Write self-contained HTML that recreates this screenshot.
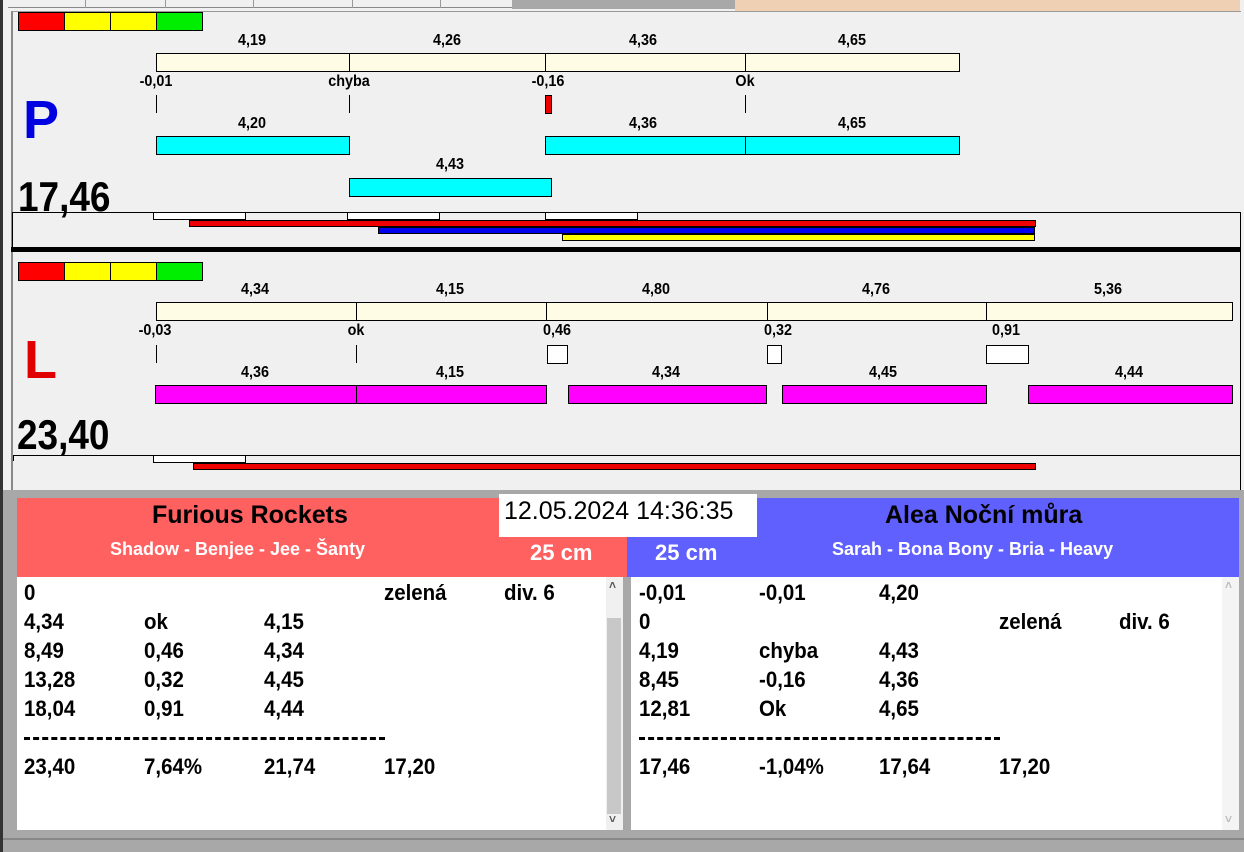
<!DOCTYPE html>
<html><head><meta charset="utf-8"><style>
*{margin:0;padding:0;box-sizing:border-box}
body{width:1244px;height:852px;background:#f0f0f0;position:relative;overflow:hidden;font-family:"Liberation Sans",Arial,sans-serif;font-weight:bold;color:#000}
.a{position:absolute}
.lb{position:absolute;font-size:16px;transform:translateX(-50%) scaleX(0.9);white-space:nowrap;line-height:16px}
.bx{position:absolute;border:1px solid #000}
.tk{position:absolute;width:1px;background:#000}
.row{position:absolute;font-size:22px;line-height:24px;white-space:nowrap;transform:scaleX(0.93);transform-origin:left}
.big{position:absolute;font-size:42px;line-height:42px;transform:scaleX(0.88);transform-origin:left}
</style></head><body>
<div class="a" style="left:0;top:0;width:3px;height:852px;background:#333"></div>
<!-- tabs strip -->
<div class="a" style="left:3px;top:0;width:1241px;height:11px;background:#f0f0f0"></div>
<div class="a" style="left:8px;top:0;width:504px;height:8px;border-bottom:1px solid #888"></div>
<div class="a" style="left:85px;top:0;width:1px;height:8px;background:#999"></div>
<div class="a" style="left:165px;top:0;width:1px;height:8px;background:#999"></div>
<div class="a" style="left:253px;top:0;width:1px;height:8px;background:#999"></div>
<div class="a" style="left:352px;top:0;width:1px;height:8px;background:#999"></div>
<div class="a" style="left:440px;top:0;width:1px;height:8px;background:#999"></div>
<div class="a" style="left:512px;top:0;width:223px;height:9px;background:#a8a8a8"></div>
<div class="a" style="left:735px;top:0;width:505px;height:11px;background:#f0d0b4"></div>
<div class="a" style="left:11px;top:11px;width:1230px;height:240px;border-left:2px solid #888;border-top:1px solid #999"></div>
<div class="bx" style="left:18px;top:12px;width:47px;height:19px;background:#f00"></div>
<div class="bx" style="left:64px;top:12px;width:47px;height:19px;background:#ff0"></div>
<div class="bx" style="left:110px;top:12px;width:47px;height:19px;background:#ff0"></div>
<div class="bx" style="left:156px;top:12px;width:47px;height:19px;background:#0e0"></div>
<div class="bx" style="left:156px;top:53px;width:194px;height:19px;background:#fffce6"></div>
<div class="bx" style="left:349px;top:53px;width:197px;height:19px;background:#fffce6"></div>
<div class="bx" style="left:545px;top:53px;width:201px;height:19px;background:#fffce6"></div>
<div class="bx" style="left:745px;top:53px;width:215px;height:19px;background:#fffce6"></div>
<div class="lb" style="left:252px;top:33px">4,19</div>
<div class="lb" style="left:447px;top:33px">4,26</div>
<div class="lb" style="left:643px;top:33px">4,36</div>
<div class="lb" style="left:852px;top:33px">4,65</div>
<div class="lb" style="left:156px;top:74px">-0,01</div>
<div class="lb" style="left:349px;top:74px">chyba</div>
<div class="lb" style="left:548px;top:74px">-0,16</div>
<div class="lb" style="left:745px;top:74px">Ok</div>
<div class="tk" style="left:156px;top:95px;height:18px"></div>
<div class="tk" style="left:349px;top:95px;height:18px"></div>
<div class="tk" style="left:745px;top:95px;height:18px"></div>
<div class="bx" style="left:545px;top:95px;width:7px;height:19px;background:#e00"></div>
<div class="lb" style="left:252px;top:116px">4,20</div>
<div class="lb" style="left:643px;top:116px">4,36</div>
<div class="lb" style="left:852px;top:116px">4,65</div>
<div class="bx" style="left:156px;top:136px;width:194px;height:19px;background:#0ff"></div>
<div class="bx" style="left:545px;top:136px;width:201px;height:19px;background:#0ff"></div>
<div class="bx" style="left:745px;top:136px;width:215px;height:19px;background:#0ff"></div>
<div class="lb" style="left:450px;top:157px">4,43</div>
<div class="bx" style="left:349px;top:178px;width:203px;height:19px;background:#0ff"></div>
<div class="a" style="left:23px;top:92px;font-size:54px;color:#0000e0;line-height:56px">P</div>
<div class="big" style="left:18px;top:176px">17,46</div>
<div class="a" style="left:12px;top:212px;width:1229px;height:36px;border:1px solid #000;border-bottom:none"></div>
<div class="bx" style="left:153px;top:212px;width:93px;height:8px;background:#fff"></div>
<div class="bx" style="left:347px;top:212px;width:93px;height:8px;background:#fff"></div>
<div class="bx" style="left:545px;top:212px;width:93px;height:8px;background:#fff"></div>
<div class="bx" style="left:189px;top:220px;width:847px;height:7px;background:#e00"></div>
<div class="bx" style="left:378px;top:227px;width:657px;height:7px;background:#00e"></div>
<div class="bx" style="left:562px;top:234px;width:473px;height:7px;background:#ff0"></div>
<div class="a" style="left:11px;top:247px;width:1230px;height:5px;background:#000"></div>
<div class="a" style="left:11px;top:252px;width:2px;height:238px;background:#888"></div>
<div class="a" style="left:1240px;top:252px;width:1px;height:238px;background:#000"></div>
<div class="bx" style="left:18px;top:262px;width:47px;height:19px;background:#f00"></div>
<div class="bx" style="left:64px;top:262px;width:47px;height:19px;background:#ff0"></div>
<div class="bx" style="left:110px;top:262px;width:47px;height:19px;background:#ff0"></div>
<div class="bx" style="left:156px;top:262px;width:47px;height:19px;background:#0e0"></div>
<div class="bx" style="left:156px;top:302px;width:201px;height:19px;background:#fffce6"></div>
<div class="bx" style="left:356px;top:302px;width:191px;height:19px;background:#fffce6"></div>
<div class="bx" style="left:546px;top:302px;width:222px;height:19px;background:#fffce6"></div>
<div class="bx" style="left:767px;top:302px;width:220px;height:19px;background:#fffce6"></div>
<div class="bx" style="left:986px;top:302px;width:247px;height:19px;background:#fffce6"></div>
<div class="lb" style="left:255px;top:282px">4,34</div>
<div class="lb" style="left:450px;top:282px">4,15</div>
<div class="lb" style="left:656px;top:282px">4,80</div>
<div class="lb" style="left:876px;top:282px">4,76</div>
<div class="lb" style="left:1108px;top:282px">5,36</div>
<div class="lb" style="left:155px;top:323px">-0,03</div>
<div class="lb" style="left:356px;top:323px">ok</div>
<div class="lb" style="left:557px;top:323px">0,46</div>
<div class="lb" style="left:778px;top:323px">0,32</div>
<div class="lb" style="left:1006px;top:323px">0,91</div>
<div class="tk" style="left:156px;top:345px;height:18px"></div>
<div class="tk" style="left:356px;top:345px;height:18px"></div>
<div class="bx" style="left:547px;top:345px;width:21px;height:19px;background:#fff"></div>
<div class="bx" style="left:767px;top:345px;width:15px;height:19px;background:#fff"></div>
<div class="bx" style="left:986px;top:345px;width:43px;height:19px;background:#fff"></div>
<div class="lb" style="left:255px;top:365px">4,36</div>
<div class="lb" style="left:450px;top:365px">4,15</div>
<div class="lb" style="left:666px;top:365px">4,34</div>
<div class="lb" style="left:883px;top:365px">4,45</div>
<div class="lb" style="left:1129px;top:365px">4,44</div>
<div class="bx" style="left:155px;top:385px;width:202px;height:19px;background:#f0f"></div>
<div class="bx" style="left:356px;top:385px;width:191px;height:19px;background:#f0f"></div>
<div class="bx" style="left:568px;top:385px;width:199px;height:19px;background:#f0f"></div>
<div class="bx" style="left:782px;top:385px;width:205px;height:19px;background:#f0f"></div>
<div class="bx" style="left:1028px;top:385px;width:205px;height:19px;background:#f0f"></div>
<div class="a" style="left:24px;top:332px;font-size:54px;color:#e00000;line-height:56px">L</div>
<div class="big" style="left:17px;top:414px">23,40</div>
<div class="a" style="left:13px;top:455px;width:1228px;height:1px;background:#000"></div>
<div class="a" style="left:13px;top:455px;width:1px;height:6px;background:#000"></div>
<div class="bx" style="left:153px;top:455px;width:93px;height:8px;background:#fff"></div>
<div class="bx" style="left:193px;top:463px;width:843px;height:7px;background:#e00"></div>
<div class="a" style="left:3px;top:490px;width:1241px;height:362px;background:#a8a8a8"></div>
<div class="a" style="left:17px;top:498px;width:610px;height:79px;background:#ff6060"></div>
<div class="a" style="left:627px;top:498px;width:612px;height:79px;background:#6060ff"></div>
<div class="a" style="left:152px;top:501px;font-size:25px;line-height:28px">Furious Rockets</div>
<div class="a" style="left:110px;top:539px;font-size:18px;color:#fff;line-height:20px">Shadow - Benjee - Jee - Šanty</div>
<div class="a" style="left:885px;top:501px;font-size:25px;line-height:28px">Alea Noční můra</div>
<div class="a" style="left:832px;top:539px;font-size:18px;color:#fff;line-height:20px">Sarah - Bona Bony - Bria - Heavy</div>
<div class="a" style="left:530px;top:541px;font-size:22px;color:#fff;line-height:24px">25 cm</div>
<div class="a" style="left:655px;top:541px;font-size:22px;color:#fff;line-height:24px">25 cm</div>
<div class="a" style="left:499px;top:494px;width:258px;height:43px;background:#fff;font-weight:normal;font-size:25px;line-height:34px;padding-left:5px">12.05.2024 14:36:35</div>
<div class="a" style="left:17px;top:577px;width:606px;height:253px;background:#fff"></div>
<div class="a" style="left:606px;top:577px;width:17px;height:253px;background:#f0f0f0"></div>
<div class="a" style="left:607px;top:618px;width:14px;height:196px;background:#c8c8c8"></div>
<div class="a" style="left:609px;top:578px;font-size:12px;color:#555">˄</div>
<div class="a" style="left:609px;top:812px;font-size:12px;color:#555">˅</div>
<div class="a" style="left:631px;top:577px;width:608px;height:253px;background:#fff"></div>
<div class="a" style="left:1222px;top:577px;width:17px;height:253px;background:#f4f4f4"></div>
<div class="a" style="left:1225px;top:578px;font-size:12px;color:#bbb">˄</div>
<div class="a" style="left:1225px;top:812px;font-size:12px;color:#bbb">˅</div>
<div class="a" style="left:3px;top:838px;width:1241px;height:2px;background:#888"></div>

<div class="row" style="left:24px;top:581px">0</div><div class="row" style="left:384px;top:581px">zelená</div><div class="row" style="left:504px;top:581px">div. 6</div>
<div class="row" style="left:24px;top:610px">4,34</div><div class="row" style="left:144px;top:610px">ok</div><div class="row" style="left:264px;top:610px">4,15</div>
<div class="row" style="left:24px;top:639px">8,49</div><div class="row" style="left:144px;top:639px">0,46</div><div class="row" style="left:264px;top:639px">4,34</div>
<div class="row" style="left:24px;top:668px">13,28</div><div class="row" style="left:144px;top:668px">0,32</div><div class="row" style="left:264px;top:668px">4,45</div>
<div class="row" style="left:24px;top:697px">18,04</div><div class="row" style="left:144px;top:697px">0,91</div><div class="row" style="left:264px;top:697px">4,44</div>
<div class="a" style="left:24px;top:737px;width:361px;border-top:3px dashed #000"></div>
<div class="row" style="left:24px;top:755px">23,40</div><div class="row" style="left:144px;top:755px">7,64%</div><div class="row" style="left:264px;top:755px">21,74</div><div class="row" style="left:384px;top:755px">17,20</div>

<div class="row" style="left:639px;top:581px">-0,01</div><div class="row" style="left:759px;top:581px">-0,01</div><div class="row" style="left:879px;top:581px">4,20</div>
<div class="row" style="left:639px;top:610px">0</div><div class="row" style="left:999px;top:610px">zelená</div><div class="row" style="left:1119px;top:610px">div. 6</div>
<div class="row" style="left:639px;top:639px">4,19</div><div class="row" style="left:759px;top:639px">chyba</div><div class="row" style="left:879px;top:639px">4,43</div>
<div class="row" style="left:639px;top:668px">8,45</div><div class="row" style="left:759px;top:668px">-0,16</div><div class="row" style="left:879px;top:668px">4,36</div>
<div class="row" style="left:639px;top:697px">12,81</div><div class="row" style="left:759px;top:697px">Ok</div><div class="row" style="left:879px;top:697px">4,65</div>
<div class="a" style="left:639px;top:737px;width:361px;border-top:3px dashed #000"></div>
<div class="row" style="left:639px;top:755px">17,46</div><div class="row" style="left:759px;top:755px">-1,04%</div><div class="row" style="left:879px;top:755px">17,64</div><div class="row" style="left:999px;top:755px">17,20</div>
</body></html>
